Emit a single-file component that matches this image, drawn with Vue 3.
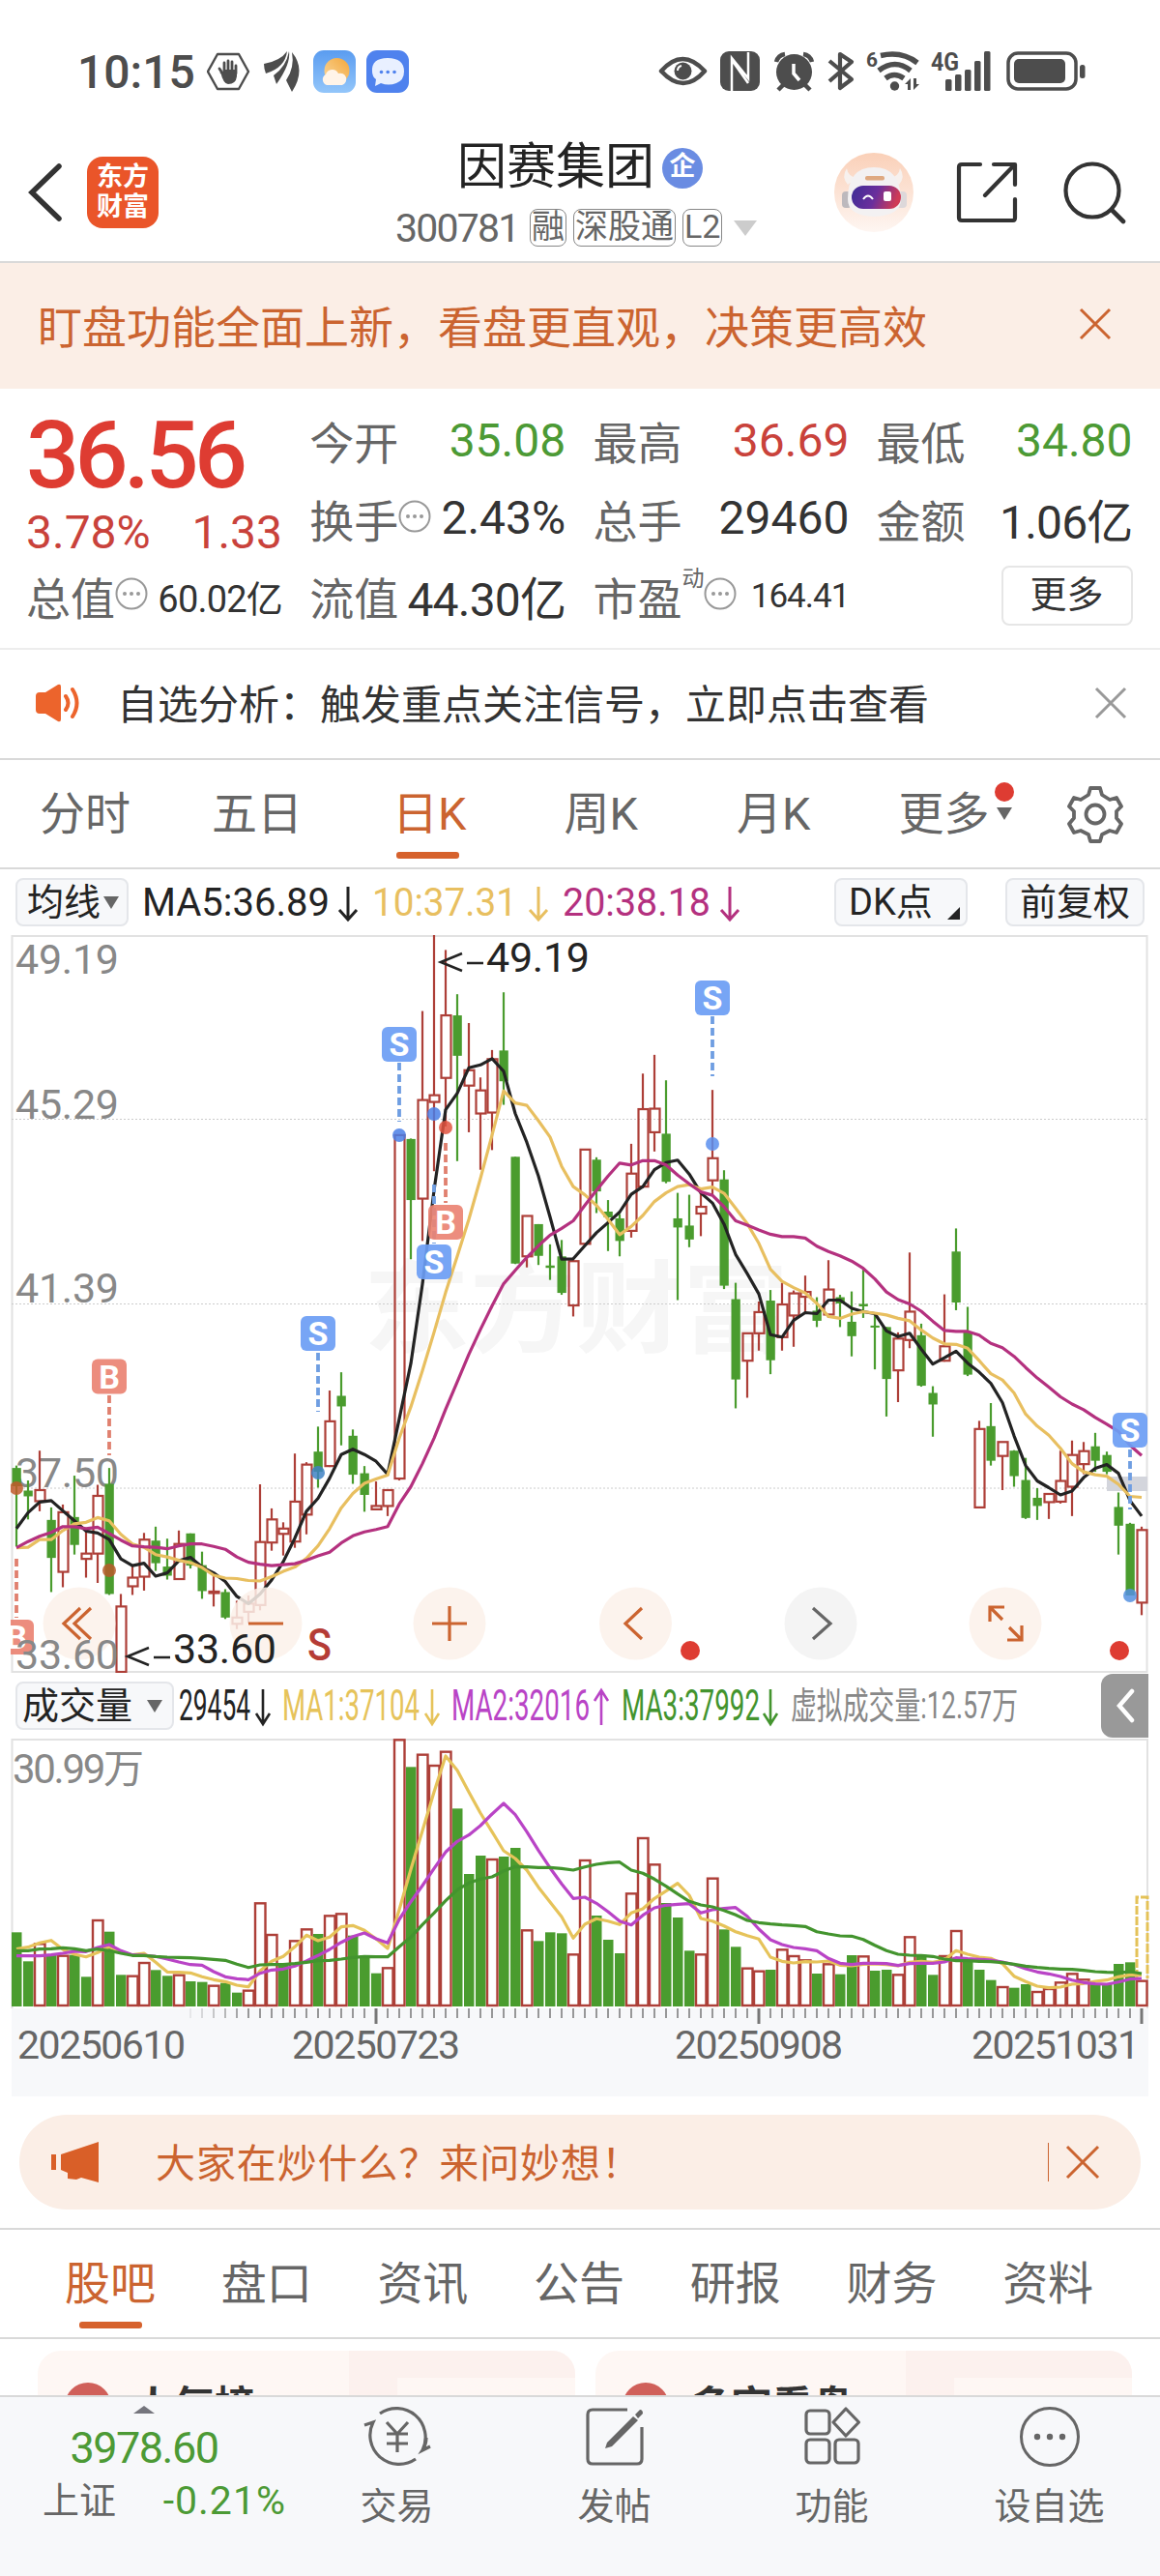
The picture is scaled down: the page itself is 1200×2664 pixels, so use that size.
<template>
  <div class="page">
    <!-- 系统状态栏 -->
    <div class="status-bar">
      <span class="time">10:15</span>
      <svg class="status-left" width="210" height="46" viewBox="214 51 210 46">
        <path d="M225 56h22l10 18-10 18h-22l-10-18z" fill="none" stroke="#4d4d4d" stroke-width="2.4" stroke-linejoin="round" />
        <path d="M229 75v-1M231 77l-4-6M232 74v-9M236 74v-11M240 74v-10M244 76v-8" stroke="#4d4d4d" stroke-width="2.8" stroke-linecap="round" fill="none" />
        <path d="M228 74l3 2v-4h14v7q-1 8-9 8-5 0-8-13z" fill="#4d4d4d" />
        <path d="M273 66q17-3 24-13-2 17-22 23-2-5-2-10z" fill="#4d4d4d" />
        <path d="M299 53q2 13-13 34l-3-9q13-9 16-25z" fill="#4d4d4d" />
        <path d="M302 54q15 18 0 41l-6-12q9-13 6-29z" fill="#4d4d4d" />
        <rect x="324" y="52" width="44" height="44" rx="11" fill="url(#sky)" />
        <circle cx="348.500" cy="73" r="13" fill="url(#sun)" />
        <path d="M338 88a6 6 0 0 1-1-11 7 7 0 0 1 13-1 6 6 0 0 1 4 12z" fill="#fff4e8" />
        <rect x="379" y="52" width="44" height="44" rx="11" fill="#4f82ee" />
        <path d="M389 82l-1 7 6-3q8 3 16 0 8-3 8-12 0-14-17-14t-16 14q0 5 4 8z" fill="#e9f0ff" />
        <circle v-for="x in [394.5, 401.2, 408]" :key="x" :cx="x" cy="74.500" r="1.800" fill="#4f82ee" />
        <defs>
          <linearGradient id="sky" x1="0" y1="0" x2="0" y2="1">
            <stop offset="0" stop-color="#5a9cf0" />
            <stop offset="1" stop-color="#93c6fa" />
          </linearGradient>
          <linearGradient id="sun" x1="1" y1="0" x2="0" y2="1">
            <stop offset="0" stop-color="#f2a73b" />
            <stop offset="1" stop-color="#fbd9a0" />
          </linearGradient>
        </defs>
      </svg>
      <svg class="status-right" width="444" height="46" viewBox="681 51 444 46">
        <g fill="none" stroke="#4d4d4d" stroke-width="4.500">
          <path d="M684 73.500q22-25 45 0-22 25-45 0z" stroke-linejoin="round" />
        </g>
        <circle cx="706.500" cy="73.500" r="9" fill="#4d4d4d" />
        <path d="M701 73q0-4 4-5" stroke="#fff" stroke-width="2" fill="none" />
        <rect x="745" y="53" width="41" height="41" rx="9" fill="#4d4d4d" />
        <path d="M757 94V60l17 21V62M774 54v8M757 62l17 24" stroke="#fff" stroke-width="2.500" fill="none" />
        <circle cx="821.500" cy="74.500" r="18.500" fill="#4d4d4d" />
        <path d="M803 64q2-7 9-8M840 64q-2-7-9-8M811 87l-6 6M832 87l6 6" stroke="#4d4d4d" stroke-width="4.500" fill="none" />
        <path d="M821 66v10l6 7" stroke="#fff" stroke-width="3.500" fill="none" />
        <path d="M858 63l23 19-12 9V56l12 8-23 20" stroke="#4d4d4d" stroke-width="4.200" fill="none" stroke-linejoin="round" />
        <text x="896" y="69" font-size="21" font-weight="700" fill="#4d4d4d" textLength="12" lengthAdjust="spacingAndGlyphs">6</text>
        <g fill="none" stroke="#4d4d4d" stroke-width="5.500">
          <path d="M911 57.500q22-5 38 7.500" />
          <path d="M909 73q17-13 33 0" />
          <path d="M916 81q9-7 19 0" />
        </g>
        <circle cx="925.500" cy="89" r="4.700" fill="#4d4d4d" />
        <path d="M936 87l6-6v12h-3v-6zM945 81v12l6-6h-3v-6z" fill="#4d4d4d" />
        <text x="963" y="73" font-size="26" font-weight="700" fill="#4d4d4d" textLength="29" lengthAdjust="spacingAndGlyphs">4G</text>
        <g fill="#4d4d4d">
          <rect x="978" y="82" width="6.500" height="12" rx="1.500" />
          <rect x="988" y="77" width="6.500" height="17" rx="1.500" />
          <rect x="998" y="72" width="6.500" height="22" rx="1.500" />
          <rect x="1008" y="63" width="6.500" height="31" rx="1.500" />
          <rect x="1018" y="53" width="6.500" height="41" rx="1.500" />
        </g>
        <rect x="1043" y="55" width="70" height="37" rx="10" fill="none" stroke="#4d4d4d" stroke-width="3.500" />
        <rect x="1049" y="61" width="53" height="25" rx="5" fill="#4d4d4d" />
        <rect x="1117" y="67" width="5.500" height="14" rx="2.500" fill="#4d4d4d" />
      </svg>
    </div>

    <!-- 顶部导航 -->
    <header class="header">
      <svg width="40" height="64" viewBox="0 0 40 64">
        <path d="M34 5L6 32l28 27" fill="none" stroke="#333" stroke-width="5.500" stroke-linecap="round" />
      </svg>
      <div class="logo"><span>东方</span><span>财富</span></div>
      <div class="stock">
        <div class="stock-name">因赛集团<i class="ent">企</i></div>
        <div class="stock-code">
          <span class="code">300781</span>
          <span v-for="tag in tags" :key="tag" class="tag">{{ tag }}</span>
          <i class="tri-down light"></i>
        </div>
      </div>
      <svg class="robot" width="82" height="82" viewBox="0 0 82 82">
        <defs>
          <linearGradient id="robotBg" x1="0" y1="0" x2="0" y2="1">
            <stop offset="0" stop-color="#fad0b8" />
            <stop offset="1" stop-color="#fef6f2" />
          </linearGradient>
          <linearGradient id="visor" x1="0" y1="0" x2="1" y2="0.200">
            <stop offset="0" stop-color="#3d2c96" />
            <stop offset="0.550" stop-color="#6a2f9c" />
            <stop offset="1" stop-color="#cf3b56" />
          </linearGradient>
        </defs>
        <circle cx="41" cy="41" r="41" fill="url(#robotBg)" />
        <path d="M13 16q-6 9 1 17l9-7q-9-2-10-10zM68 16q6 9-1 17l-9-7q9-2 10-10z" fill="#f7f1ee" />
        <rect x="8" y="40" width="10" height="17" rx="4" fill="#bdb9bd" />
        <rect x="64" y="40" width="11" height="17" rx="4" fill="#ddd8da" />
        <path d="M14 48q0-33 27-33t28 33q0 17-28 18-27-1-27-18z" fill="#f3f1f2" />
        <rect x="32" y="24" width="20" height="4.500" rx="2" fill="#dfa981" />
        <rect x="18" y="34" width="51" height="24" rx="12" fill="url(#visor)" />
        <path d="M30 48q5-7 10 0" stroke="#fff" stroke-width="2" fill="none" />
        <rect x="51" y="40" width="8" height="10" rx="2" fill="#fff" />
      </svg>
      <svg class="share" width="64" height="64" viewBox="0 0 64 64">
        <path d="M25 3H6q-3 0-3 3v52q0 3 3 3h53q2 0 2-3V39M39 3h22v21M60 4L30 35" fill="none" stroke="#333" stroke-width="4.200" stroke-linecap="round" stroke-linejoin="round" />
      </svg>
      <svg width="66" height="66" viewBox="0 0 66 66">
        <circle cx="31" cy="31" r="27.500" fill="none" stroke="#333" stroke-width="4.200" />
        <path d="M51 51l12 12" stroke="#333" stroke-width="4.600" stroke-linecap="round" />
      </svg>
    </header>

    <div class="promo">
      <span>盯盘功能全面上新，看盘更直观，决策更高效</span>
      <svg width="34" height="34" viewBox="0 0 34 34"><path d="M2 2l30 30M32 2L2 32" stroke="#cb6430" stroke-width="3" /></svg>
    </div>

    <!-- 行情数据 -->
    <section class="quote">
      <div class="price-box">
        <div class="price">36.56</div>
        <div class="change"><span>3.78%</span><span>1.33</span></div>
      </div>
      <div v-for="q in quotes" :key="q.label" class="cell">
        <span class="label">{{ q.label }}</span>
        <sup v-if="q.sup" class="sup">{{ q.sup }}</sup>
        <svg v-if="q.info" class="info" width="34" height="34" viewBox="0 0 34 34">
          <circle cx="17" cy="17" r="15.500" fill="none" stroke="#999" stroke-width="2" />
          <circle v-for="x in [10, 17, 24]" :key="x" :cx="x" cy="17" r="2" fill="#999" />
        </svg>
        <span :class="['value', q.cls]">{{ q.value }}</span>
      </div>
      <div class="cell end"><span class="more-btn">更多</span></div>
    </section>

    <div class="analysis">
      <svg width="50" height="42" viewBox="0 0 50 42">
        <path d="M1 14q0-4 4-4h6L24 2q3-1 3 2v34q0 3-3 2l-13-8H5q-4 0-4-4z" fill="#ec642c" />
        <path d="M32 14q5 7 0 14M39 7q9 14 0 28" fill="none" stroke="#ec642c" stroke-width="4" stroke-linecap="round" />
      </svg>
      <span>自选分析：触发重点关注信号，立即点击查看</span>
      <svg width="34" height="34" viewBox="0 0 34 34"><path d="M2 2l30 30M32 2L2 32" stroke="#999" stroke-width="3" /></svg>
    </div>

    <!-- 周期切换 -->
    <nav class="periods">
      <span
        v-for="(item, index) in periods"
        :key="item"
        :class="['period', { active: activePeriod === index }]"
        @click="activePeriod = index"
      >{{ item }}</span>
      <span class="period more">更多<i class="tri-down"></i><i class="red-dot"></i></span>
      <svg class="gear" width="58" height="60" viewBox="0 0 58 60">
        <path d="M24 3h10l2 7 8 5 7-2 5 9-5 5v7l5 6-5 9-7-2-8 4-2 7H24l-2-7-8-4-7 2-5-9 5-6v-7l-5-5 5-9 7 2 8-5z" fill="none" stroke="#666" stroke-width="3.800" stroke-linejoin="round" />
        <circle cx="29" cy="30" r="9.500" fill="none" stroke="#666" stroke-width="3.800" />
      </svg>
    </nav>

    <div class="ma-bar">
      <span class="chip ma-chip">均线<i class="tri-down small"></i></span>
      <svg class="legend" width="630" height="50" viewBox="142 0 630 50">
        <g v-for="m in maLegend" :key="m.text" :fill="m.color" :stroke="m.color">
          <text :x="m.x" y="39" font-size="41" stroke="none" :textLength="m.w" lengthAdjust="spacingAndGlyphs">{{ m.text }}</text>
          <path :d="`M${m.a} 9v34m-9 -10l9 10l9 -10`" fill="none" stroke-width="3" />
        </g>
      </svg>
      <span class="chip dk-chip">DK点<i class="corner"></i></span>
      <span class="chip">前复权</span>
    </div>

    <!-- K线图 -->
    <svg class="kline" width="1200" height="763" viewBox="0 0 1200 763">
      <defs>
        <clipPath id="plot"><rect x="11" y="0" width="1177" height="763" /></clipPath>
      </defs>
      <text x="376" y="424" class="watermark" textLength="440" lengthAdjust="spacingAndGlyphs">东方财富</text>
      <rect x="12.500" y="1" width="1174" height="761" fill="none" stroke="#e2e2e2" stroke-width="2" />
      <line v-for="y in [190.5, 381.5, 572]" :key="y" x1="12" :y1="y" x2="1187" :y2="y" stroke="#ccc" stroke-dasharray="2 2" />
      <text v-for="p in priceLabels" :key="p.text" x="16" :y="p.y" class="axis-price" textLength="107">{{ p.text }}</text>
      <rect x="1145" y="560" width="42" height="15" fill="#d3d5dc" />

      <g clip-path="url(#plot)">
        <g v-for="(c, i) in candles" :key="i" :stroke="c[0] ? RED : GREEN" stroke-width="2.200">
          <template v-if="c[0]">
            <line :x1="cx(i)" :y1="ky(c[1])" :x2="cx(i)" :y2="ky(c[2])" />
            <line :x1="cx(i)" :y1="ky(c[3])" :x2="cx(i)" :y2="ky(c[4])" />
            <rect :x="cx(i) - 4.500" :y="ky(c[2])" width="10" :height="Math.max(ky(c[3]) - ky(c[2]), 0.6)" fill="none" />
          </template>
          <template v-else>
            <line :x1="cx(i)" :y1="ky(c[1])" :x2="cx(i)" :y2="ky(c[4])" />
            <rect :x="cx(i) - 4.500" :y="ky(c[2])" width="9.300" :height="Math.max(ky(c[3]) - ky(c[2]), 2)" :fill="GREEN" stroke="none" />
          </template>
        </g>

        <g fill="none" stroke-width="3.200" stroke-linejoin="round">
          <polyline :points="line(ma5, ky)" stroke="#232323" />
          <polyline :points="line(ma10, ky)" stroke="#e8bf60" />
          <polyline :points="line(ma20, ky)" stroke="#b4317f" />
        </g>

        <!-- 买卖点标记 -->
        <g v-for="(m, i) in marks" :key="'m' + i">
          <line :x1="m.x" :y1="m.from" :x2="m.x" :y2="m.to" :stroke="m.t === 'S' ? '#6f9ee2' : '#e0806f'" stroke-width="3.800" stroke-dasharray="8 4" />
          <circle :cx="m.x" :cy="m.dot" r="7" :fill="m.dc" fill-opacity="0.850" />
          <rect :x="m.x - 18" :y="m.y - 18" width="36" height="36" rx="6" :fill="m.t === 'S' ? '#6b9df4' : '#ea8373'" fill-opacity="0.920" />
          <text :x="m.x" :y="m.y + 12" class="mark-text">{{ m.t }}</text>
        </g>
      </g>

      <path d="M478 19l-22 9 22 9M483 29h17" class="pointer" />
      <text x="503" y="38" class="extreme" textLength="107">49.19</text>

      <g v-for="b in tools" :key="b.x">
        <circle :cx="b.x" cy="712" r="37.500" :fill="b.gray ? '#f2f2f2' : '#fbf1ea'" fill-opacity="0.850" />
        <path :d="b.d" fill="none" :stroke="b.gray ? '#666' : '#cb6430'" stroke-width="3.200" />
      </g>
      <text x="16" y="759" class="axis-price" textLength="107">33.60</text>
      <path d="M154 737l-22 9 22 9M159 747h17" class="pointer" />
      <text x="179" y="753" class="extreme" textLength="107">33.60</text>
      <text x="318" y="750" class="s-mark" textLength="25" lengthAdjust="spacingAndGlyphs">S</text>
      <circle cx="714" cy="740" r="10" fill="#de3c32" />
      <circle cx="1158" cy="740" r="10" fill="#de3c32" />
    </svg>

    <!-- 成交量 -->
    <div class="vol-bar">
      <span class="chip vol-chip">成交量<i class="tri-down small"></i></span>
      <svg class="legend" width="880" height="60" viewBox="182 0 880 60">
        <g v-for="m in volLegend" :key="m.text" :fill="m.color" :stroke="m.color">
          <text :x="m.x" y="45" font-size="44" stroke="none" :textLength="m.w" lengthAdjust="spacingAndGlyphs">{{ m.text }}</text>
          <path v-if="m.a" :d="m.up ? `M${m.a} 50v-36m-7 11l7 -11l7 11` : `M${m.a} 13v36m-7 -11l7 11l7 -11`" fill="none" stroke-width="2.600" />
        </g>
        <text x="818" y="43" font-size="38" fill="#888" textLength="235" lengthAdjust="spacingAndGlyphs">虚拟成交量:12.57万</text>
      </svg>
      <span class="collapse">
        <svg width="20" height="36" viewBox="0 0 20 36"><path d="M17 3L4 18l13 15" fill="none" stroke="#fff" stroke-width="4.500" stroke-linecap="round" /></svg>
      </span>
    </div>
    <svg class="volume" width="1200" height="370" viewBox="0 0 1200 370">
      <rect x="12" y="279" width="1176" height="91" fill="#f7f8fa" />
      <path d="M12.500 279V1H1187V279" fill="none" stroke="#e2e2e2" stroke-width="2" />
      <text x="13" y="46" class="axis-vol" textLength="136">30.99万</text>
      <template v-for="(v, i) in volumes" :key="i">
        <rect v-if="v > 0" :x="cx(i) - 5" :y="vy(v) + 1" width="10.500" :height="276 - vy(v) - 1" fill="#fff" :stroke="RED" stroke-width="2.400" />
        <rect v-else :x="cx(i) - 5" :y="vy(-v)" width="10.500" :height="277 - vy(-v)" :fill="GREEN" />
      </template>
      <path d="M1176 248V164h11v84" fill="none" stroke="#e4c258" stroke-width="3" stroke-dasharray="9 2" />
      <g fill="none" stroke-width="3.200" stroke-linejoin="round">
        <polyline :points="line(vma1, vy)" stroke="#e6c35a" />
        <polyline :points="line(vma2, vy)" stroke="#b944c6" />
        <polyline :points="line(vma3, vy)" stroke="#43942e" />
      </g>
      <template v-for="i in 97" :key="'t' + i">
        <line v-if="i > 14" :x1="cx(i)" y1="279" :x2="cx(i)" :y2="bigTicks.includes(i) ? 295 : 289" stroke="#777" :stroke-width="bigTicks.includes(i) ? 3 : 1.5" :opacity="Math.min(1, (i - 14) / 6)" />
      </template>
      <text v-for="d in dates" :key="d.text" :x="d.x" y="331" class="axis-date" textLength="174">{{ d.text }}</text>
    </svg>

    <!-- 妙想提示 -->
    <div class="ask">
      <svg width="50" height="44" viewBox="0 0 50 44">
        <path d="M0 14h5v16H0zM10 14L49 1v42l-18-5-5 2-9-1v-6l-7-3z" fill="#d95f28" />
      </svg>
      <span class="ask-text">大家在炒什么？来问妙想！</span>
      <i class="ask-line"></i>
      <svg width="36" height="36" viewBox="0 0 36 36"><path d="M2 2l32 32M34 2L2 34" stroke="#cb6430" stroke-width="3" /></svg>
    </div>

    <nav class="sections">
      <span
        v-for="(item, index) in sections"
        :key="item"
        :class="['section', { active: activeSection === index }]"
        @click="activeSection = index"
      >{{ item }}</span>
    </nav>

    <div class="cards">
      <div class="card"><i class="card-dot"></i>人气榜<i class="card-deco"></i></div>
      <div class="card"><i class="card-dot"></i>多空看盘<i class="card-deco"></i></div>
    </div>

    <!-- 底部工具栏 -->
    <footer class="tabbar">
      <div class="index">
        <i class="tri-up"></i>
        <div class="index-value">3978.60</div>
        <div class="index-row"><span>上证</span><span class="green pct">-0.21%</span></div>
      </div>
      <div class="tab">
        <svg width="72" height="66" viewBox="0 0 72 66">
          <g fill="none" stroke="#666" stroke-width="3.200">
            <path d="M18 9A30 30 0 0 1 62 47M66 34q0 7-4 13l8-4M55 56A30 30 0 0 1 11 18L2 21" />
            <path d="M25 18l11 12 11-12M25 30h22M25 40h22M36 30v19" />
          </g>
        </svg>
        <span>交易</span>
      </div>
      <div class="tab">
        <svg width="72" height="66" viewBox="0 0 72 66">
          <path d="M49 5H13q-5 0-5 5v46q0 5 5 5h46q5 0 5-5V23" fill="none" stroke="#666" stroke-width="3.200" />
          <path d="M55 12l5 4-27 27-7 2 2-6zM57 10l5-5q3 0 3 4l-5 5z" fill="#666" />
        </svg>
        <span>发帖</span>
      </div>
      <div class="tab">
        <svg width="72" height="66" viewBox="0 0 72 66">
          <g fill="none" stroke="#666" stroke-width="3.200" stroke-linejoin="round">
            <rect x="9" y="6" width="24" height="24" rx="4" />
            <rect x="9" y="36" width="24" height="24" rx="4" />
            <rect x="39" y="36" width="24" height="24" rx="4" />
            <path d="M50 4L63.500 18 50 32 37 18z" />
          </g>
        </svg>
        <span>功能</span>
      </div>
      <div class="tab">
        <svg width="72" height="66" viewBox="0 0 72 66">
          <circle cx="36" cy="33" r="29.500" fill="none" stroke="#666" stroke-width="3" />
          <circle v-for="x in [23, 36, 49]" :key="x" :cx="x" cy="33" r="3.200" fill="#666" />
        </svg>
        <span>设自选</span>
      </div>
    </footer>
  </div>
</template>

<script setup>
import { ref } from 'vue'

const RED = '#ad3f38'
const GREEN = '#4a9c2e'

const activePeriod = ref(2)
const activeSection = ref(0)
const tags = ['融', '深股通', 'L2']
const periods = ['分时', '五日', '日K', '周K', '月K']
const sections = ['股吧', '盘口', '资讯', '公告', '研报', '财务', '资料']

const quotes = [
  { label: '今开', value: '35.08', cls: 'green' },
  { label: '最高', value: '36.69', cls: 'red' },
  { label: '最低', value: '34.80', cls: 'green' },
  { label: '换手', value: '2.43%', info: true },
  { label: '总手', value: '29460' },
  { label: '金额', value: '1.06亿', cls: 'tight' },
  { label: '总值', value: '60.02亿', info: true, cls: 'mid' },
  { label: '流值', value: '44.30亿', cls: 'tight' },
  { label: '市盈', value: '164.41', sup: '动', info: true, cls: 'small' }
]

const maLegend = [
  { text: 'MA5:36.89', x: 147, w: 194, a: 360, color: '#232323' },
  { text: '10:37.31', x: 385, w: 150, a: 557, color: '#e8bf60' },
  { text: '20:38.18', x: 582, w: 153, a: 755, color: '#b4317f' }
]
const volLegend = [
  { text: '29454', x: 185, w: 74, a: 272, color: '#232323' },
  { text: 'MA1:37104', x: 292, w: 142, a: 447, color: '#e6c35a' },
  { text: 'MA2:32016', x: 467, w: 143, a: 622, up: true, color: '#b944c6' },
  { text: 'MA3:37992', x: 643, w: 143, a: 797, color: '#43942e' }
]

const priceLabels = [
  { text: '49.19', y: 40 },
  { text: '45.29', y: 190 },
  { text: '41.39', y: 380 },
  { text: '37.50', y: 571 }
]
const dates = [
  { text: '20250610', x: 18 },
  { text: '20250723', x: 302 },
  { text: '20250908', x: 698 },
  { text: '20251031', x: 1005 }
]
const bigTicks = [31, 64, 97]

const marks = [
  { t: 'B', x: 17, y: 726, from: 645, to: 706, dot: 572, dc: '#c05a2c' },
  { t: 'B', x: 113, y: 456.5, from: 476, to: 538, dot: 657, dc: '#b85a2a' },
  { t: 'S', x: 329, y: 412, from: 432, to: 493, dot: 556, dc: '#3f83c4' },
  { t: 'S', x: 413, y: 113, from: 132, to: 193, dot: 207, dc: '#4a7fe6' },
  { t: 'S', x: 449, y: 338, from: 258, to: 319, dot: 185, dc: '#4a7fe6' },
  { t: 'B', x: 461, y: 297, from: 215, to: 277, dot: 199, dc: '#e2533f' },
  { t: 'S', x: 737, y: 65, from: 84, to: 146, dot: 216, dc: '#5b8fee' },
  { t: 'S', x: 1169, y: 512, from: 532, to: 594, dot: 683, dc: '#5590e0' }
]

const tools = [
  { x: 82, d: 'M83 696l-17 16 17 16M94 696l-17 16 17 16' },
  { x: 275, d: 'M257 712h36' },
  { x: 465, d: 'M447 712h36M465 694v36' },
  { x: 657.5, d: 'M664 696l-17 16 17 16' },
  { x: 849, d: 'M841 696l18 16-18 16', gray: true },
  { x: 1040, d: 'M1024 710v-15h15M1024 695l13 13M1057 714v15h-15M1057 729l-13-13' }
]

// [阳线?, 最高, 实体上沿, 实体下沿, 最低]
const candles = [
  [0, 1117, 1122, 1160, 1285], [0, 1148, 1169, 1181, 1229], [1, 1086, 1168, 1191, 1212], [0, 1204, 1230, 1309, 1380],
  [1, 1198, 1214, 1338, 1370], [0, 1138, 1224, 1282, 1302], [1, 1250, 1300, 1311, 1350], [1, 1157, 1180, 1300, 1361],
  [0, 1122, 1155, 1384, 1386], [1, 1384, 1410, 1546, 1546], [1, 1325, 1350, 1368, 1386], [1, 1257, 1271, 1348, 1377],
  [0, 1244, 1273, 1320, 1336], [0, 1269, 1327, 1346, 1354], [1, 1252, 1280, 1353, 1355], [0, 1258, 1258, 1325, 1331],
  [0, 1296, 1324, 1378, 1394], [1, 1345, 1379, 1382, 1410], [0, 1374, 1380, 1433, 1436], [1, 1398, 1433, 1446, 1457],
  [1, 1387, 1404, 1421, 1445], [1, 1156, 1276, 1407, 1418], [1, 1206, 1229, 1277, 1294], [1, 1235, 1248, 1259, 1304],
  [1, 1092, 1192, 1275, 1288], [1, 1110, 1115, 1219, 1260], [0, 1036, 1088, 1130, 1163], [1, 961, 1025, 1118, 1120],
  [0, 923, 972, 994, 1075], [0, 1042, 1055, 1136, 1155], [0, 1118, 1133, 1178, 1213], [1, 1150, 1201, 1208, 1210],
  [1, 1166, 1168, 1201, 1222], [1, 430, 430, 1144, 1148], [0, 437, 438, 565, 688], [1, 172, 357, 562, 650],
  [1, 14, 347, 361, 505], [1, 45, 181, 311, 412], [0, 137, 181, 265, 484], [1, 197, 295, 327, 424],
  [1, 310, 337, 385, 502], [1, 253, 272, 383, 461], [0, 133, 254, 318, 367], [0, 475, 475, 697, 698],
  [1, 597, 598, 682, 705], [0, 615, 615, 681, 700], [0, 657, 701, 706, 731], [0, 648, 682, 758, 762],
  [1, 690, 692, 784, 807], [1, 459, 460, 656, 658], [0, 476, 481, 547, 592], [0, 565, 589, 601, 671],
  [0, 594, 603, 650, 682], [1, 448, 510, 629, 643], [1, 302, 376, 537, 540], [1, 263, 375, 424, 464],
  [0, 316, 427, 527, 530], [0, 550, 603, 622, 773], [0, 554, 618, 647, 663], [1, 550, 579, 593, 640],
  [1, 336, 478, 524, 555], [0, 503, 522, 743, 750], [0, 737, 771, 938, 998], [1, 842, 842, 899, 976],
  [1, 776, 798, 842, 878], [0, 752, 774, 898, 927], [1, 737, 782, 850, 878], [1, 753, 759, 805, 870],
  [1, 722, 756, 766, 800], [0, 767, 795, 816, 829], [1, 690, 751, 803, 810], [0, 762, 767, 780, 829],
  [0, 755, 818, 848, 890], [0, 710, 781, 786, 810], [0, 800, 826, 830, 917], [0, 829, 829, 937, 1015],
  [1, 840, 853, 919, 985], [1, 674, 797, 856, 873], [0, 822, 846, 951, 953], [0, 952, 966, 990, 1057],
  [1, 761, 869, 899, 901], [0, 624, 672, 778, 794], [0, 787, 840, 928, 931], [1, 1024, 1041, 1204, 1205],
  [0, 987, 1035, 1107, 1117], [1, 1068, 1068, 1097, 1168], [0, 1085, 1086, 1139, 1161], [0, 1101, 1147, 1226, 1228],
  [0, 1164, 1184, 1201, 1230], [1, 1175, 1176, 1193, 1228], [1, 1086, 1149, 1192, 1196], [1, 1065, 1095, 1161, 1222],
  [1, 1068, 1087, 1114, 1135], [0, 1049, 1077, 1107, 1130], [0, 1088, 1095, 1130, 1135], [0, 1173, 1203, 1242, 1302],
  [0, 1236, 1238, 1387, 1387], [1, 1244, 1251, 1402, 1428]
]

const ma5 = [
  1248, 1215, 1193, 1190, 1211, 1232, 1253, 1257, 1271, 1311, 1325, 1320, 1347, 1340, 1315, 1308, 1328, 1340, 1358, 1389,
  1404, 1384, 1355, 1317, 1268, 1212, 1185, 1143, 1094, 1083, 1094, 1108, 1135, 1020, 905, 740, 545, 377, 343, 290,
  284, 271, 297, 385, 445, 515, 600, 688, 687, 660, 633, 612, 590, 553, 537, 502, 487, 482, 511, 550,
  571, 615, 678, 718, 760, 845, 850, 815, 799, 801, 773, 773, 790, 797, 801, 837, 849, 842, 875, 906,
  893, 879, 904, 923, 946, 986, 1055, 1117, 1149, 1163, 1178, 1170, 1142, 1123, 1115, 1133, 1190, 1222
]
const ma10 = [
  1288, 1287, 1271, 1271, 1252, 1238, 1235, 1225, 1232, 1260, 1280, 1287, 1302, 1307, 1314, 1319, 1329, 1345, 1351, 1352,
  1356, 1357, 1348, 1337, 1328, 1310, 1284, 1248, 1205, 1175, 1154, 1145, 1137, 1060, 995, 920, 840, 757, 682, 605,
  520, 430, 338, 363, 368, 400, 434, 495, 537, 554, 576, 605, 637, 620, 597, 568, 550, 537, 533, 542,
  538, 551, 582, 614, 655, 709, 734, 747, 758, 780, 807, 811, 802, 797, 800, 804, 811, 816, 835, 852,
  864, 865, 873, 899, 926, 939, 966, 1010, 1035, 1054, 1081, 1113, 1130, 1136, 1139, 1156, 1181, 1183
]
const ma20 = [
  1288, 1275, 1264, 1256, 1244, 1244, 1248, 1245, 1258, 1272, 1284, 1286, 1287, 1290, 1284, 1280, 1280, 1285, 1291, 1307,
  1318, 1322, 1325, 1323, 1321, 1314, 1305, 1297, 1278, 1263, 1255, 1250, 1244, 1197, 1161, 1113, 1060, 1000, 943, 886,
  834, 785, 739, 711, 684, 660, 638, 624, 608, 576, 545, 515, 488, 492, 483, 483, 492, 513, 531, 548,
  555, 579, 608, 617, 627, 636, 641, 641, 644, 661, 672, 681, 692, 707, 729, 756, 772, 781, 796, 817,
  836, 838, 838, 846, 863, 872, 890, 913, 935, 954, 974, 989, 1001, 1017, 1031, 1046, 1075, 1096
]

// 负数为阴量柱
const volumes = [
  -805, -895, 838, -875, 875, -875, -943, 765, -803, -937, 938, 897, -922, -940, 935, -957, -959, 968, -962, -992,
  983, 712, 810, -902, 829, 793, -810, 751, 745, -815, -877, -932, 913, 205, -292, 251, 285, 242, -421, -624,
  -567, 576, -570, -543, 796, -832, -805, -808, 871, 579, -753, -828, -870, 682, 510, 592, -714, -759, -862, 871,
  635, -796, -850, 914, 923, -921, 856, 876, 889, -933, 901, -935, -876, 877, -924, -921, 934, 817, -875, -937,
  876, 798, -890, -921, -953, 972, -977, -966, 987, 978, 958, 931, 949, -965, -965, -903, -898, 953
]
const vma1 = [
  857, 851, 838, 830, 858, 873, 881, 868, 850, 865, 875, 870, 898, 928, 929, 931, 943, 952, 958, 969,
  974, 925, 895, 880, 850, 814, 831, 820, 788, 784, 799, 825, 855, 735, 610, 490, 370, 258, 302, 370,
  435, 493, 552, 576, 612, 665, 711, 757, 823, 780, 763, 770, 781, 745, 732, 700, 677, 653, 690, 762,
  770, 785, 803, 815, 826, 882, 895, 900, 896, 897, 894, 907, 909, 904, 903, 905, 909, 898, 895, 898,
  891, 862, 873, 882, 886, 902, 941, 958, 972, 977, 975, 966, 964, 957, 953, 943, 937, 937
]
const vma2 = [
  878, 878, 878, 875, 870, 864, 865, 852, 843, 862, 875, 876, 880, 888, 897, 905, 907, 927, 943, 949,
  952, 932, 922, 919, 910, 894, 877, 858, 836, 818, 807, 825, 838, 765, 710, 660, 607, 556, 523, 503,
  474, 438, 405, 440, 493, 551, 605, 655, 700, 696, 715, 741, 770, 782, 752, 729, 721, 718, 716, 745,
  735, 731, 728, 755, 795, 828, 843, 852, 856, 862, 886, 901, 905, 901, 901, 902, 908, 902, 901, 901,
  897, 884, 887, 889, 891, 897, 905, 918, 928, 934, 942, 953, 961, 965, 966, 959, 950, 948
]
const vma3 = [
  862, 862, 857, 856, 853, 856, 862, 857, 862, 870, 877, 877, 880, 882, 883, 884, 886, 889, 892, 904,
  914, 906, 905, 905, 902, 898, 893, 892, 888, 883, 880, 881, 881, 850, 820, 781, 745, 707, 673, 652,
  640, 633, 615, 601, 602, 604, 604, 607, 612, 602, 594, 589, 587, 612, 622, 640, 662, 686, 709, 720,
  726, 737, 751, 768, 775, 779, 782, 784, 787, 803, 810, 816, 817, 827, 845, 862, 873, 876, 877, 880,
  888, 893, 893, 895, 896, 899, 904, 910, 914, 917, 919, 920, 923, 927, 929, 930, 927, 933
]

const cx = (i) => 17 + i * 12
const ky = (v) => (v - 14) * 0.4974
const vy = (v) => (v - 204) / 3
const line = (arr, fn) => arr.map((v, i) => `${cx(i).toFixed(1)},${fn(v).toFixed(1)}`).join(' ')
</script>

<style>
body {
  margin: 0;
  background: #fff;
}
</style>

<style scoped>
.page {
  width: 1200px;
  height: 2664px;
  display: flex;
  flex-direction: column;
  overflow: hidden;
  background: #fff;
  font-family: Roboto, 'Noto Sans CJK SC', sans-serif;
  color: #333;
}

.page > * {
  flex-shrink: 0;
  box-sizing: border-box;
}

i {
  font-style: normal;
}

svg {
  display: block;
  flex-shrink: 0;
}

.green {
  color: #4c9a35;
}

.red {
  color: #c9423b;
}

/* 状态栏 */
.status-bar {
  height: 130px;
  padding: 51px 75px 0 80px;
  display: flex;
  align-items: flex-start;
}

.time {
  width: 134px;
  flex-shrink: 0;
  font-size: 48px;
  font-weight: 500;
  color: #4d4d4d;
  line-height: 48px;
}

.status-right {
  margin-left: auto;
}

/* 顶部导航 */
.header {
  height: 142px;
  padding: 0 31px 3px 27px;
  display: flex;
  align-items: center;
  border-bottom: 2px solid #d9d9d9;
}

.logo {
  width: 74px;
  height: 74px;
  margin-left: 23px;
  display: flex;
  flex-direction: column;
  align-items: center;
  justify-content: center;
  border-radius: 16px;
  background: #ea5529;
  color: #fff;
  font-size: 27px;
  font-weight: 700;
  line-height: 31px;
}

.stock {
  width: 382px;
  margin-left: 245px;
  padding-top: 2px;
}

.stock-name {
  display: flex;
  align-items: center;
  margin-left: 64px;
  height: 72px;
  font-size: 51px;
  line-height: 62px;
  padding-bottom: 3px;
  box-sizing: border-box;
  color: #232323;
}

.ent {
  width: 42px;
  height: 42px;
  margin: 1px 0 0 8px;
  border-radius: 50%;
  background: #6a8ce2;
  color: #fff;
  font-size: 27px;
  font-weight: 700;
  line-height: 39px;
  text-align: center;
}

.stock-code {
  display: flex;
  align-items: center;
  height: 50px;
  color: #666;
  white-space: nowrap;
}

.code {
  width: 139px;
  flex-shrink: 0;
  font-size: 41px;
  letter-spacing: -1.8px;
}

.tag {
  height: 37px;
  flex-shrink: 0;
  padding: 0 1px;
  margin-right: 7px;
  border: 1.500px solid #888;
  border-radius: 8px;
  font-size: 34px;
  line-height: 35px;
}

.tri-down {
  width: 0;
  height: 0;
  flex-shrink: 0;
  border: 8px solid transparent;
  border-top: 13px solid #666;
  border-bottom: 0;
}

.tri-down.light {
  margin-left: 5px;
  border-width: 16px 12px 0;
  border-top-color: #ccc;
}

.robot {
  margin-left: 72px;
}

.share {
  margin: 0 46px 0 44px;
}

.promo {
  height: 130px;
  padding: 0 50px 5px 39px;
  display: flex;
  align-items: center;
  justify-content: space-between;
  background: #fbeee6;
  color: #cb6430;
  font-size: 46px;
}

/* 行情 */
.quote {
  height: 270px;
  padding: 13px 28px 0 27px;
  display: grid;
  grid-template-columns: repeat(4, 265px);
  grid-template-rows: repeat(3, 80.5px);
  column-gap: 28.200px;
  border-bottom: 2px solid #ededed;
}

.price-box {
  grid-row: 1 / 3;
}

.price {
  height: 106px;
  color: #de3c32;
  font-size: 97px;
  font-weight: 500;
  letter-spacing: -4.6px;
  line-height: 112px;
}

.change {
  display: flex;
  justify-content: space-between;
  color: #c9423b;
  font-size: 48px;
  line-height: 60px;
}

.cell {
  display: flex;
  align-items: center;
  white-space: nowrap;
}

.label {
  color: #666;
  font-size: 46px;
}

.value {
  margin-left: auto;
  font-size: 48px;
}

.value.mid {
  font-size: 38px;
  letter-spacing: -0.8px;
}

.value.tight {
  letter-spacing: -0.8px;
}

.value.small {
  font-size: 35px;
  letter-spacing: -1px;
}

.info {
  margin-top: -4px;
}

.sup {
  align-self: flex-start;
  margin-top: 3px;
  color: #666;
  font-size: 23px;
}

.cell.end {
  grid-column: 4;
  grid-row: 3;
  justify-content: flex-end;
}

.cell:nth-child(2) { grid-area: 1 / 2; }
.cell:nth-child(3) { grid-area: 1 / 3; }
.cell:nth-child(4) { grid-area: 1 / 4; }
.cell:nth-child(5) { grid-area: 2 / 2; }
.cell:nth-child(6) { grid-area: 2 / 3; }
.cell:nth-child(7) { grid-area: 2 / 4; }

.more-btn {
  width: 132px;
  height: 58px;
  border: 2px solid #e6e6e6;
  border-radius: 8px;
  font-size: 38px;
  line-height: 56px;
  text-align: center;
}

.analysis {
  height: 114px;
  padding: 0 34px 3px 36px;
  display: flex;
  align-items: center;
  border-bottom: 2px solid #d9d9d9;
  font-size: 42px;
}

.analysis span {
  flex: 1;
  margin: -3px 0 0 35px;
}

/* 周期 */
.periods {
  height: 113px;
  padding: 0 38px 0 41px;
  display: flex;
  align-items: center;
  border-bottom: 2px solid #d9d9d9;
  color: #666;
  font-size: 47px;
}

.period {
  position: relative;
  height: 111px;
  line-height: 112px;
  margin-right: 84px;
}

.period:nth-child(2) { margin-right: 93px; }
.period:nth-child(3) { margin-right: 101px; }
.period:nth-child(4) { margin-right: 102px; }
.period:nth-child(5) { margin-right: 91px; }

.period.active,
.section.active {
  color: #cb6430;
}

.period.active::after,
.section.active::after {
  content: '';
  position: absolute;
  left: 50%;
  bottom: 9px;
  width: 65px;
  height: 7px;
  margin-left: -34px;
  border-radius: 3px;
  background: #d6622d;
}

.period.more {
  display: flex;
  align-items: center;
  margin-right: 0;
}

.period.more .tri-down {
  margin-left: 7px;
}

.red-dot {
  position: absolute;
  right: -2px;
  top: 23px;
  width: 20px;
  height: 20px;
  border-radius: 50%;
  background: #de3c32;
}

.gear {
  margin-left: auto;
}

/* 指标栏 */
.ma-bar {
  height: 68px;
  padding: 0 16px;
  display: flex;
  align-items: center;
}

.chip {
  box-sizing: border-box;
  height: 50px;
  padding: 0 13px;
  display: flex;
  flex-shrink: 0;
  align-items: center;
  border: 2px solid #e4e6ea;
  border-radius: 8px;
  background: #f7f8fa;
  color: #232323;
  font-size: 38px;
  line-height: 44px;
  white-space: nowrap;
}

.ma-chip {
  width: 117px;
  padding: 0 10px;
}

.tri-down.small {
  margin-left: 3px;
}

.dk-chip {
  width: 138px;
  margin: 0 39px 0 auto;
  position: relative;
}

.corner {
  position: absolute;
  right: 6px;
  bottom: 5px;
  border-left: 13px solid transparent;
  border-bottom: 13px solid #232323;
}

.legend {
  margin-left: 9px;
}

.watermark {
  font-size: 104px;
  font-weight: 700;
  fill: #f6f6f6;
}

.axis-price {
  font-size: 43px;
  fill: #888;
}

.extreme {
  font-size: 43px;
  fill: #232323;
}

.pointer {
  fill: none;
  stroke: #232323;
  stroke-width: 2.600;
}

.mark-text {
  font-size: 34px;
  font-weight: 700;
  fill: #fff;
  text-anchor: middle;
}

.s-mark {
  font-size: 47px;
  font-weight: 500;
  fill: #b53c36;
}

.vol-bar {
  height: 68px;
  padding: 0 12px 0 16px;
  display: flex;
  align-items: center;
}

.vol-chip {
  width: 164px;
  padding: 0 5px;
}

.vol-chip .small {
  margin-left: 15px;
}

.vol-bar .legend {
  margin-left: 2px;
}

.collapse {
  width: 49px;
  height: 66px;
  margin-left: auto;
  display: flex;
  align-items: center;
  justify-content: center;
  border-radius: 12px 0 0 12px;
  background: #999;
}

.axis-vol {
  font-size: 42px;
  fill: #888;
}

.axis-date {
  font-size: 41px;
  fill: #666;
}

/* 提示条 */
.ask {
  height: 98px;
  margin: 19px 20px;
  padding: 0 42px 0 33px;
  display: flex;
  align-items: center;
  border-radius: 49px;
  background: #fbeee6;
  color: #cb6430;
  font-size: 41px;
}

.ask-text {
  flex: 1;
  margin: -5px 0 0 58px;
  letter-spacing: 0.9px;
}

.ask-line {
  width: 1.500px;
  height: 40px;
  margin-right: 17px;
  background: #cb6430;
}

.sections {
  height: 115px;
  padding: 0 28px;
  display: flex;
  border-top: 2px solid #d9d9d9;
  border-bottom: 2px solid #d9d9d9;
  color: #666;
  font-size: 47px;
}

.section {
  position: relative;
  width: 161.7px;
  flex-shrink: 0;
  padding-left: 39px;
  box-sizing: border-box;
  line-height: 112px;
}

.section.active::after {
  left: 88px;
}

.cards {
  height: 58px;
  padding: 12px 29px 0 39px;
  display: flex;
  gap: 21px;
  overflow: hidden;
}

.card {
  position: relative;
  width: 556px;
  height: 150px;
  padding: 20px 0 0 28px;
  box-sizing: border-box;
  display: flex;
  align-items: flex-start;
  border-radius: 24px;
  background: #fef7f4;
  overflow: hidden;
  font-size: 42px;
  font-weight: 700;
  line-height: 76px;
}

.card-dot {
  width: 48px;
  height: 48px;
  margin: 13px 23px 0 0;
  border-radius: 50%;
  background: #d0605a;
}

.card-deco {
  position: absolute;
  right: 0;
  top: 0;
  width: 234px;
  height: 32px;
  border-left: 50px solid #fcf1ee;
  border-top: 28px solid #fcf1ee;
  box-sizing: content-box;
  margin-right: -50px;
}

/* 底部 */
.tabbar {
  height: 190px;
  display: flex;
  border-top: 2px solid #d9d9d9;
  background: #f7f8fa;
  color: #666;
  font-size: 38px;
}

.index {
  width: 298px;
  flex-shrink: 0;
  display: flex;
  flex-direction: column;
  align-items: center;
}

.tri-up {
  margin-top: 9px;
  border: 11px solid transparent;
  border-bottom: 8px solid #75757d;
  border-top: 0;
}

.index-value {
  margin-top: 11px;
  color: #4c9a35;
  font-size: 45px;
  letter-spacing: -1.5px;
  line-height: 50px;
}

.index-row {
  width: 252px;
  margin: 1px 0 0 42px;
  display: flex;
  align-items: center;
  justify-content: space-between;
  line-height: 56px;
}

.pct {
  font-size: 41px;
  letter-spacing: 1px;
}

.tab {
  width: 225px;
  padding-top: 8px;
  display: flex;
  flex-direction: column;
  align-items: center;
  line-height: 79px;
}
</style>
